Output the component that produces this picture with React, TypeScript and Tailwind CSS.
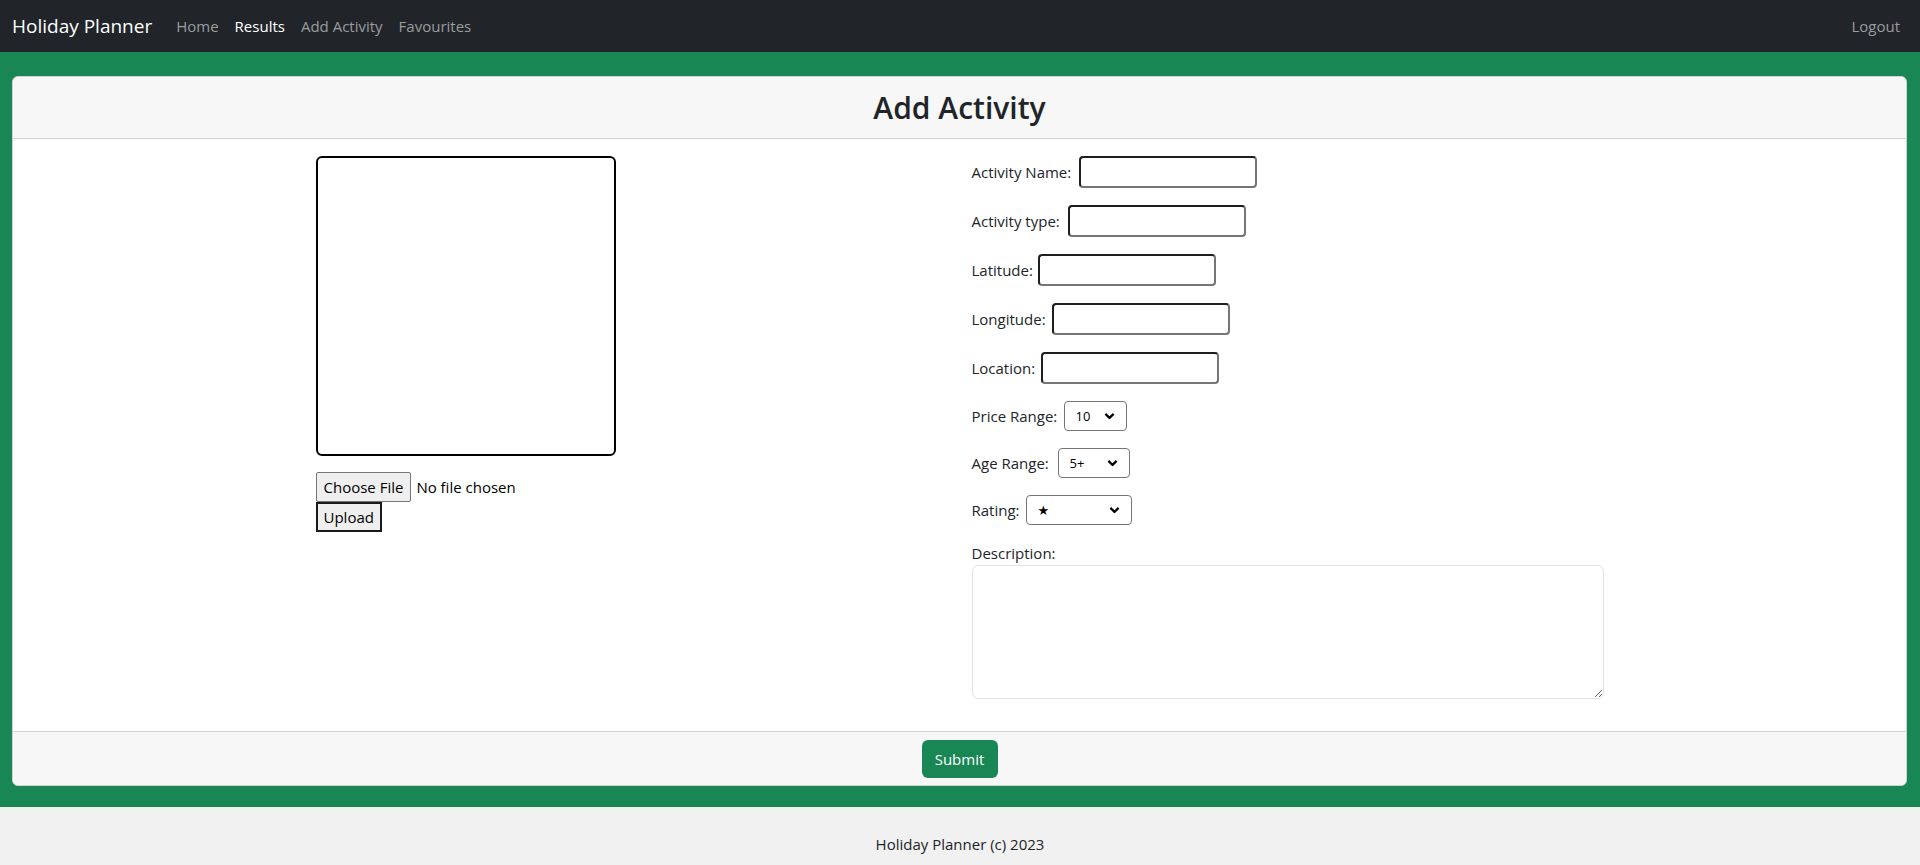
import { ChangeEvent, useState } from "react";

const font = "font-['Segoe_UI','Open_Sans','Noto_Sans',sans-serif]";

const links = [
    { label: "Home", active: false },
    { label: "Results", active: true },
    { label: "Add Activity", active: false },
    { label: "Favourites", active: false },
];

// label widths are tuned so each input starts where the original one does
const textFields = [
    { label: "Activity Name:", width: "w-[107px]" },
    { label: "Activity type:", width: "w-[96px]" },
    { label: "Latitude:", width: "w-[66px]" },
    { label: "Longitude:", width: "w-[80px]" },
    { label: "Location:", width: "w-[69px]" },
];

function Chevron() {
    return (
        <svg
            width="11"
            height="7"
            viewBox="0 0 11 7"
            className="pointer-events-none absolute right-[12px] top-1/2 -translate-y-1/2"
        >
            <path d="M1.4 1.4 L5.5 5.4 L9.6 1.4" fill="none" stroke="#000" strokeWidth="2.2" />
        </svg>
    );
}

function SelectField({
    label,
    labelWidth,
    selectWidth,
    options,
}: {
    label: string;
    labelWidth: string;
    selectWidth: string;
    options: string[];
}) {
    return (
        <div className="flex items-center h-[30px]">
            <label className={`${labelWidth} whitespace-nowrap`}>{label}</label>
            <div className={`relative ${selectWidth} h-[30px]`}>
                <select className="appearance-none w-full h-full border border-[#767676] rounded-[4px] bg-white pl-[11px] text-[13px] text-black outline-none font-['Segoe_UI','Open_Sans','DejaVu_Sans',sans-serif]">
                    {options.map((o) => (
                        <option key={o}>{o}</option>
                    ))}
                </select>
                <Chevron />
            </div>
        </div>
    );
}

export default function App() {
    const [fileName, setFileName] = useState("");

    const onFile = (e: ChangeEvent<HTMLInputElement>) => {
        setFileName(e.target.files?.[0]?.name ?? "");
    };

    return (
        <div className={`min-h-screen bg-[#f1f1f1] text-[#212529] text-[15px] leading-6 ${font}`}>
            {/* Navbar */}
            <nav className="h-[52px] bg-[#212529] flex items-center justify-between pl-3 pr-3">
                <div className="flex items-center">
                    <a className="text-[19px] text-white mr-4 leading-[30px]">Holiday Planner</a>
                    <ul className="flex items-center">
                        {links.map((l) => (
                            <li key={l.label}>
                                <a className={`px-2 ${l.active ? "text-white" : "text-[#9a9c9e]"}`}>{l.label}</a>
                            </li>
                        ))}
                    </ul>
                </div>
                <a className="px-2 text-[#9a9c9e]">Logout</a>
            </nav>

            {/* Green wrapper */}
            <div className="bg-[#198754] pt-6 pb-[21px] pl-3 pr-[13px]">
                <div className="bg-white border border-[#d2d2d2] rounded-md overflow-hidden">
                    <div className="h-[62px] bg-[#f7f7f7] border-b border-[#d2d2d2] flex items-center justify-center">
                        <h2 className="text-[30px] font-semibold leading-none">Add Activity</h2>
                    </div>

                    <div className="px-4 pt-[17px] pb-[32px]">
                        <div className="w-[1320px] mx-auto grid grid-cols-2 gap-6">
                            {/* Image + upload */}
                            <div className="pl-4">
                                <div className="w-[300px] h-[300px] border-2 border-black rounded-md" />
                                <div className="mt-4 flex items-center h-[30px]">
                                    <label className="h-[30px] px-[7px] flex items-center bg-[#efefef] border border-[#767676] rounded-[2px] text-black cursor-pointer">
                                        Choose File
                                        <input type="file" className="hidden" onChange={onFile} />
                                    </label>
                                    <span className="ml-[5px] text-black">{fileName || "No file chosen"}</span>
                                </div>
                                <button className="h-[30px] w-[66px] bg-[#efefef] border-2 border-[#1a1a1a] text-black text-left pl-[6px]">
                                    Upload
                                </button>
                            </div>

                            {/* Fields */}
                            <div className="flex flex-col gap-[17px]">
                                {textFields.map((f) => (
                                    <div key={f.label} className="flex items-center h-[32px]">
                                        <label className={`${f.width} whitespace-nowrap`}>{f.label}</label>
                                        <input
                                            type="text"
                                            className="w-[178px] h-[32px] border-2 border-t-[#1f1f1f] border-l-[#1f1f1f] border-r-[#767676] border-b-[#767676] rounded-[4px] px-1 outline-none"
                                        />
                                    </div>
                                ))}
                                <SelectField label="Price Range:" labelWidth="w-[92px]" selectWidth="w-[63px]" options={["10", "20", "50", "100"]} />
                                <SelectField label="Age Range:" labelWidth="w-[86px]" selectWidth="w-[72px]" options={["5+", "12+", "18+"]} />
                                <SelectField label="Rating:" labelWidth="w-[54px]" selectWidth="w-[106px]" options={["★", "★★", "★★★", "★★★★", "★★★★★"]} />
                                <div className="-mt-px">
                                    <label className="block">Description:</label>
                                    <textarea className="block w-[632px] h-[134px] border border-[#dee2e6] rounded-md px-3 py-1.5 outline-none resize" />
                                </div>
                            </div>
                        </div>
                    </div>

                    <div className="h-[54px] bg-[#f7f7f7] border-t border-[#d2d2d2] flex items-center justify-center">
                        <button className="h-[38px] w-[76px] bg-[#198754] text-white rounded-md">Submit</button>
                    </div>
                </div>
            </div>

            {/* Footer */}
            <footer className="pt-[25px] pb-6 text-center">Holiday Planner (c) 2023</footer>
        </div>
    );
}
